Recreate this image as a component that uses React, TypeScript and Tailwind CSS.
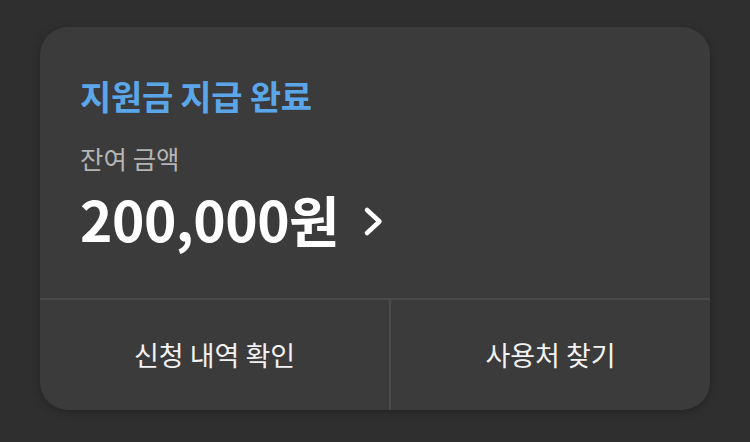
import React from 'react';

const font = { fontFamily: '"Noto Sans CJK KR", "Noto Sans", sans-serif' };

export default function App() {
  return (
    <div className="w-[750px] h-[442px] bg-[#2f2f2f] pt-[27px] px-[40px]" style={font}>
      <div className="w-[670px] h-[383px] bg-[#3b3b3b] rounded-[28px] shadow-[0_2px_8px_rgba(0,0,0,0.25)] flex flex-col overflow-hidden">
        <div className="h-[271px] px-[40px] pt-[52px] flex flex-col">
          <h1 className="text-[34px] leading-[1] font-bold text-[#5ba6e9] tracking-[-0.3px]">지원금 지급 완료</h1>
          <p className="mt-[32px] text-[25.5px] leading-[1] text-[#b4b4b4]">잔여 금액</p>
          <button className="mt-[20px] flex items-center gap-[23px] text-white">
            <span className="text-[55px] leading-[1] font-bold tracking-[-0.5px]">200,000원</span>
            <svg className="mt-[7px]" width="23" height="31" viewBox="0 0 23 31" fill="none">
              <path d="M5 4 L17.5 15.5 L5 27" stroke="white" strokeWidth="4.5" strokeLinecap="round" strokeLinejoin="round" />
            </svg>
          </button>
        </div>
        <div className="flex-1 flex border-t-2 border-[#4a4a4a]">
          <button className="w-[351px] shrink-0 flex items-center justify-center text-[27px] text-[#f2f2f2] border-r-2 border-[#4a4a4a]">신청 내역 확인</button>
          <button className="flex-1 flex items-center justify-center text-[27px] text-[#f2f2f2]">사용처 찾기</button>
        </div>
      </div>
    </div>
  );
}
